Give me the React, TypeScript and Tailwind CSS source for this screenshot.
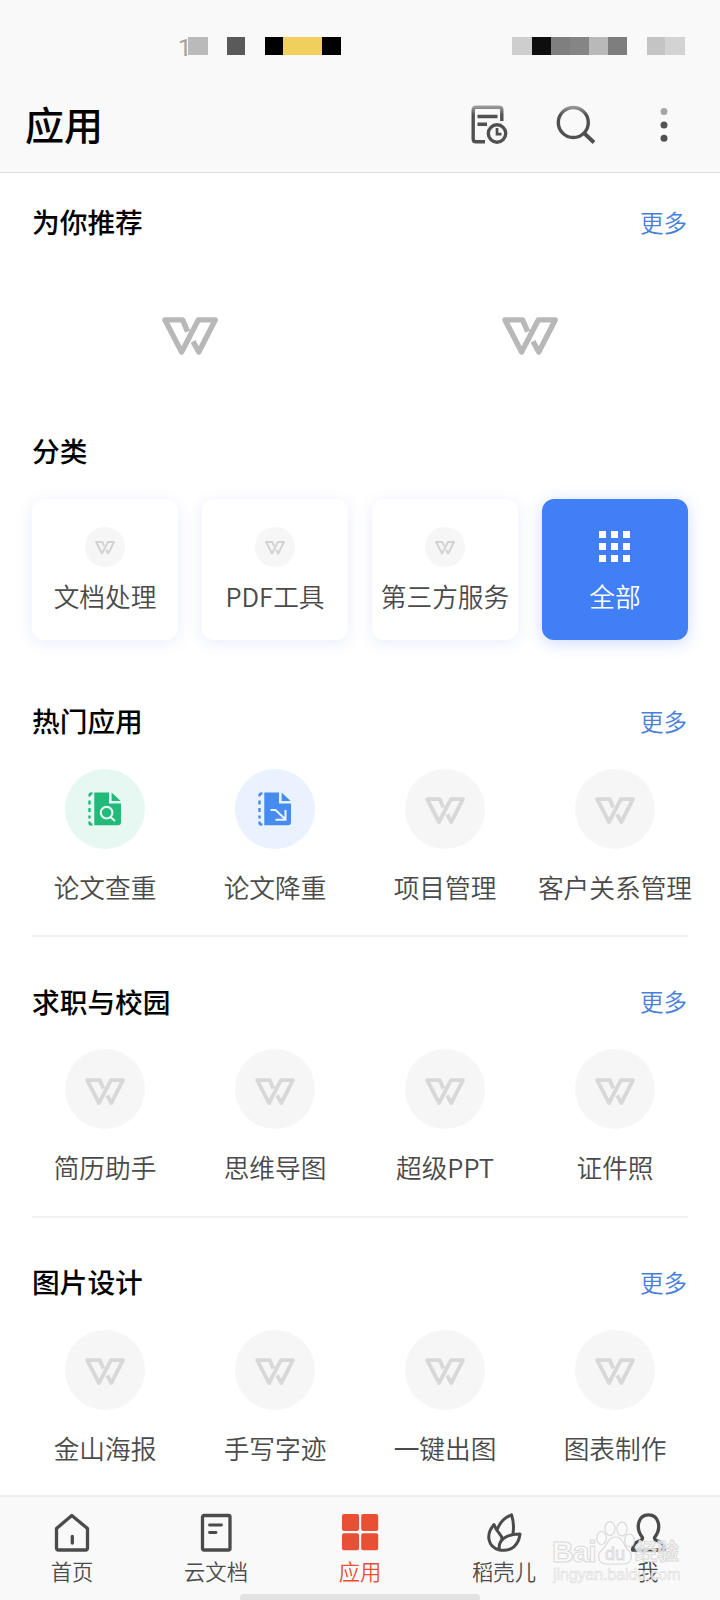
import type { ReactNode } from "react";

function WLogo({ className }: { className: string }) {
  return (
    <svg viewBox="0 0 56 38" className={className} fill="none" stroke="currentColor" strokeWidth="5.4" strokeLinejoin="round">
      <path d="M25.6 14.6 L20.6 2.9 H3 L19.6 35 L36.3 2.9 H53.2 L36.8 35 L31 24.4" />
    </svg>
  );
}

function SectionHeader({ title, more }: { title: string; more?: boolean }) {
  return (
    <div className="flex h-10 items-center justify-between pl-8 pr-[33px]">
      <h2 className="text-[27.7px] font-medium leading-10 text-black">{title}</h2>
      {more && <a className="pt-px text-[23.5px] font-[350] leading-10 text-[#4880d8]">更多</a>}
    </div>
  );
}

function PaperIcon({ color, soft, children }: { color: string; soft: string; children: ReactNode }) {
  return (
    <svg viewBox="0 0 34 34" className="size-[34px]" fill="none">
      <path d="M4.4 1.5 H3.5 Q1.5 1.5 1.5 3.5 V4.5 M1.5 8.5 V12.5 M1.5 16 V20 M1.5 23.5 V26.5 M1.5 29.5 V30.5 Q1.5 32.5 3.5 32.5 H4.4" stroke={color} strokeWidth="2.4" />
      <path d="M6.3 .5 H21 V11.5 H33 V30 Q33 33.3 29.7 33.3 H6.3 Z" fill={color} />
      <path d="M23.6 .5 L32.6 9 H23.6 Z" fill={color} />
      <g stroke={soft} strokeWidth="2.1">{children}</g>
    </svg>
  );
}

const findIcon = (
  <PaperIcon color="#22b97b" soft="#e7f7f1">
    <circle cx="18.6" cy="20.7" r="5.8" />
    <path d="M22.5 25 L27 29" />
  </PaperIcon>
);
const reduceIcon = (
  <PaperIcon color="#468bef" soft="#e9f2fe">
    <path d="M12.5 18 H17.5 L27 27 M27.5 18 V27.7 H17.5" />
  </PaperIcon>
);

type AppItem = { label: string; icon?: ReactNode; bg?: string };

function AppSection({ title, items, divider }: { title: string; items: AppItem[]; divider?: boolean }) {
  return (
    <section className="h-[280.7px]">
      <SectionHeader title={title} more />
      <div className="grid grid-cols-4 px-5 pt-[28.7px]">
        {items.map((it) => (
          <div key={it.label} className="flex flex-col items-center">
            <div className={`flex size-20 items-center justify-center rounded-full ${it.bg ?? "bg-[#f6f6f6]"}`}>
              {it.icon ?? <WLogo className="mt-1 w-10 text-[#d8d8d8]" />}
            </div>
            <span className="mt-[18px] whitespace-nowrap text-[25.7px] font-[350] leading-10 text-[#4a4a4a]">{it.label}</span>
          </div>
        ))}
      </div>
      {divider && <div className="mx-8 mt-[28.5px] h-0.5 bg-[#f1f1f1]" />}
    </section>
  );
}

function NavItem({ label, active, children }: { label: string; active?: boolean; children: ReactNode }) {
  return (
    <div className={`flex flex-1 flex-col items-center pt-[15px] ${active ? "text-[#e94f35]" : "text-[#4b4b4b]"}`}>
      <svg viewBox="0 0 40 42" className="h-[42px] w-10" fill="none" stroke="currentColor" strokeWidth="3.3" strokeLinejoin="round" strokeLinecap="round">
        {children}
      </svg>
      <span className="mt-[3px] text-[21.3px] font-[350] leading-[28px]">{label}</span>
    </div>
  );
}

export default function App() {
  return (
    <div className="relative flex h-[1600px] w-[720px] flex-col overflow-hidden bg-white font-['Noto_Sans_CJK_SC',sans-serif]">
      <header className="h-[173px] shrink-0 border-b border-[#dcdcdc] bg-[#f9f9f9]">
        <div className="flex h-[92px] pt-[37px]">
          <span className="-mt-[2px] ml-[178px] w-[10px] font-['Roboto',sans-serif] text-[24px] leading-[26px] text-[#a0a0a0]">1</span>
          <div className="flex h-[18px]">
            <i className="w-5 bg-[#bababa]" />
            <i className="ml-[19px] w-[18px] bg-[#5a5a5a]" />
            <i className="ml-5 w-[18px] bg-black" />
            <i className="w-[39px] bg-[#f0cf5d]" />
            <i className="w-[19px] bg-black" />
          </div>
          <div className="ml-[171px] flex h-[18px]">
            <i className="w-5 bg-[#cecece]" />
            <i className="w-[19px] bg-[#0e0e0e]" />
            <i className="w-[19px] bg-[#7f7f7f]" />
            <i className="w-[19px] bg-[#858585]" />
            <i className="w-[19px] bg-[#b9b9b9]" />
            <i className="w-[19px] bg-[#7e7e7e]" />
            <i className="ml-5 w-[18px] bg-[#c4c4c4]" />
            <i className="w-5 bg-[#d3d3d3]" />
          </div>
        </div>
        <div className="flex h-[64px] items-center pl-[25px]">
          <h1 className="-mt-0.5 w-[443px] text-[39px] font-medium leading-[60px] text-black">应用</h1>
          <svg viewBox="0 0 44 44" className="size-11" fill="none" stroke="#505050" strokeWidth="3.4">
            <defs>
              <linearGradient id="fade" gradientUnits="userSpaceOnUse" x1="0" y1="4" x2="0" y2="13">
                <stop offset="0" stopColor="#a0a0a0" />
                <stop offset="1" stopColor="#505050" />
              </linearGradient>
            </defs>
            <path d="M17 39.800 H8 Q5.200 39.800 5.200 37 V8 Q5.200 5.300 8 5.300 H31 Q33.800 5.300 33.800 8 V19" stroke="url(#fade)" />
            <path d="M9.500 14.500 H29.500 M9.500 22.300 H19" />
            <circle cx="29" cy="31.500" r="8.700" />
            <path d="M29 26 V32.200 H33.500" strokeWidth="2.700" />
          </svg>
          <svg viewBox="0 0 44 44" className="ml-[40px] size-11" fill="none" stroke="#505050" strokeWidth="3.4">
            <circle cx="21.300" cy="20.500" r="15" stroke="url(#fade)" />
            <path d="M32 31 L42 40.500" strokeWidth="3.800" />
          </svg>
          <svg viewBox="0 0 44 44" className="ml-[46px] size-11" fill="#525252">
            <circle cx="22" cy="9.500" r="3.500" fill="#a6a6a6" />
            <circle cx="22" cy="22.900" r="3.500" />
            <circle cx="22" cy="36.200" r="3.500" />
          </svg>
        </div>
      </header>

      <main className="flex-1 overflow-hidden">
        <section className="h-[229px] pt-[28px]">
          <SectionHeader title="为你推荐" more />
          <div className="grid grid-cols-2 px-5 pt-[76px]">
            <WLogo className="w-14 justify-self-center text-[#b8b8b8]" />
            <WLogo className="w-14 justify-self-center text-[#b8b8b8]" />
          </div>
        </section>

        <section className="h-[298px] pt-[28px]">
          <SectionHeader title="分类" />
          <div className="grid grid-cols-4 gap-6 px-8 pt-[29px]">
            {["文档处理", "PDF工具", "第三方服务"].map((t) => (
              <div key={t} className="flex h-[141px] flex-col items-center rounded-xl bg-white pt-7 shadow-[0_3px_16px_rgba(80,110,220,0.12)]">
                <div className="flex size-10 items-center justify-center rounded-full bg-[#f6f6f6]">
                  <WLogo className="mt-0.5 w-5 text-[#d2d2d2]" />
                </div>
                <span className="mt-[9px] whitespace-nowrap text-[25.7px] font-[350] leading-10 text-[#4a4a4a]">{t}</span>
              </div>
            ))}
            <div className="flex h-[141px] flex-col items-center rounded-xl bg-[#417ff7] pt-7 shadow-[0_3px_16px_rgba(65,110,247,0.25)]">
              <div className="mt-1 mb-1 mr-0.5 grid grid-cols-3 gap-[5px]">
                {Array.from({ length: 9 }, (_, i) => (
                  <i key={i} className="size-[7px] bg-white" />
                ))}
              </div>
              <span className="mt-[10px] text-[25.700px] font-[350] leading-10 text-white">全部</span>
            </div>
          </div>
        </section>

        <AppSection
          divider
          title="热门应用"
          items={[
            { label: "论文查重", icon: findIcon, bg: "bg-[#e7f7f1]" },
            { label: "论文降重", icon: reduceIcon, bg: "bg-[#e9f2fe]" },
            { label: "项目管理" },
            { label: "客户关系管理" },
          ]}
        />
        <AppSection divider title="求职与校园" items={[{ label: "简历助手" }, { label: "思维导图" }, { label: "超级PPT" }, { label: "证件照" }]} />
        <AppSection title="图片设计" items={[{ label: "金山海报" }, { label: "手写字迹" }, { label: "一键出图" }, { label: "图表制作" }]} />
      </main>

      <nav className="flex h-[105px] shrink-0 border-t-2 border-[#eeeeee] bg-[#f9f9f9]">
        <NavItem label="首页">
          <path d="M4.500 16.500 L19.800 3.500 L35.500 16.500 V36 Q35.500 38 33.500 38 H6.500 Q4.500 38 4.500 36 Z" />
          <path d="M20.300 24.500 V31" />
        </NavItem>
        <NavItem label="云文档">
          <rect x="6.500" y="3.500" width="27.500" height="34.500" rx="1.500" />
          <path d="M13.500 13 H25.500 M13.500 20.500 H20" strokeWidth="2.800" />
        </NavItem>
        <NavItem label="应用" active>
          <g fill="currentColor" stroke="none">
            <rect x="2" y="2" width="17" height="17" rx="2" />
            <rect x="21.200" y="2" width="17" height="17" rx="2" />
            <rect x="2" y="21.200" width="17" height="17" rx="2" />
            <rect x="21.200" y="21.200" width="17" height="17" rx="2" />
          </g>
        </NavItem>
        <NavItem label="稻壳儿">
          <path d="M13 18 Q17 7 27.500 2.800 Q30.500 12 29 21.500 M10 12.800 Q12 18 15 21 Q18.500 25 18 28" strokeWidth="3" />
          <path d="M10 12.800 C1.500 22 3.500 35 15.500 38 C13.500 28 22 22 36 22 C34.500 33 28 40 15.500 38" strokeWidth="3" />
        </NavItem>
        <NavItem label="我">
          <path d="M14.500 25.500 C7 16 10 2.800 20.500 2.800 C31 2.800 34 16 26.500 25.500 Q26 28 31 29.500 Q36 31.500 36.500 38 H4.500 Q5 31.500 10 29.500 Q15 28 14.500 25.500 Z" />
        </NavItem>
      </nav>

      <div className="absolute bottom-0 left-[240px] h-[6px] w-[240px] rounded-t-[4px] bg-[#e2e2e2]" />

      <div className="absolute left-[551px] top-[1518px] h-[66px] w-[134px] font-['Liberation_Sans','Noto_Sans_CJK_SC',sans-serif] text-[#fafafa]/80">
        <svg viewBox="0 0 134 66" className="absolute inset-0 h-full w-full" fill="#fafafa" fillOpacity=".8" stroke="#dadada" strokeWidth="1.200">
          <ellipse cx="50.500" cy="20" rx="4.800" ry="6.500" />
          <ellipse cx="59" cy="10.500" rx="5" ry="6.800" />
          <ellipse cx="71" cy="11" rx="5" ry="6.800" />
          <ellipse cx="78.500" cy="22.500" rx="4.800" ry="6.500" />
          <path d="M64.500 19 C72 19 72 27 77 32 C83 37 81 46 72 46 H56 C47 46 45 37 51 32 C57 27 57 19 64.500 19 Z" />
        </svg>
        <span className="absolute left-px top-[18px] text-[30px] font-bold leading-[32px] tracking-[-1px] [-webkit-text-stroke:1px_#dadada]">Bai</span>
        <span className="absolute left-[54px] top-[26px] text-[18px] leading-[20px] [-webkit-text-stroke:1px_#dadada]">du</span>
        <span className="absolute left-[84px] top-[21px] whitespace-nowrap text-[22px] font-bold leading-[26px] [-webkit-text-stroke:1px_#dadada]">经验</span>
        <span className="absolute left-[2px] top-[49px] whitespace-nowrap text-[15.800px] leading-[16px] [-webkit-text-stroke:0.600px_#dedede]">jingyan.baidu.com</span>
      </div>
    </div>
  );
}
